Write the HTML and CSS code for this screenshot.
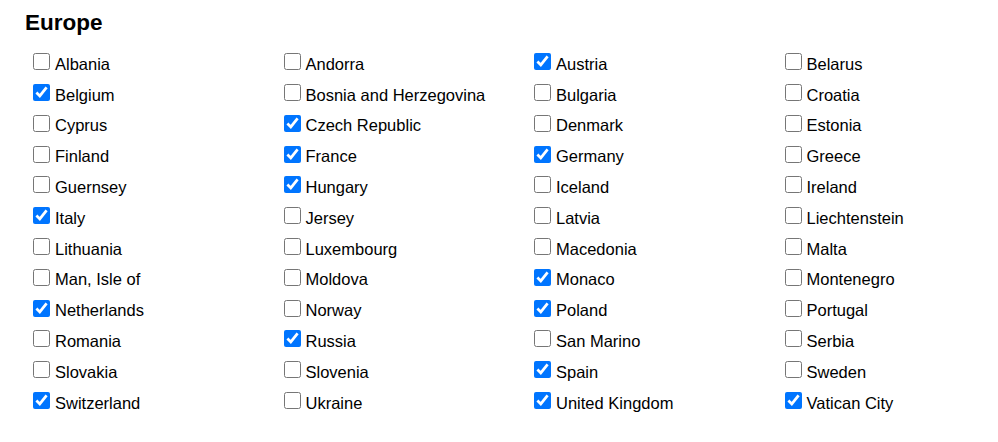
FILE: index.html
```html
<!DOCTYPE html>
<html>
<head>
<meta charset="utf-8">
<link rel="stylesheet" href="styles.css">
</head>
<body>
<div class="page">
  <h2 class="title">Europe</h2>
  <div class="list">
    <label class="item"><input type="checkbox"><span>Albania</span></label>
    <label class="item"><input type="checkbox"><span>Andorra</span></label>
    <label class="item"><input type="checkbox" checked><span>Austria</span></label>
    <label class="item"><input type="checkbox"><span>Belarus</span></label>
    <label class="item"><input type="checkbox" checked><span>Belgium</span></label>
    <label class="item"><input type="checkbox"><span>Bosnia and Herzegovina</span></label>
    <label class="item"><input type="checkbox"><span>Bulgaria</span></label>
    <label class="item"><input type="checkbox"><span>Croatia</span></label>
    <label class="item"><input type="checkbox"><span>Cyprus</span></label>
    <label class="item"><input type="checkbox" checked><span>Czech Republic</span></label>
    <label class="item"><input type="checkbox"><span>Denmark</span></label>
    <label class="item"><input type="checkbox"><span>Estonia</span></label>
    <label class="item"><input type="checkbox"><span>Finland</span></label>
    <label class="item"><input type="checkbox" checked><span>France</span></label>
    <label class="item"><input type="checkbox" checked><span>Germany</span></label>
    <label class="item"><input type="checkbox"><span>Greece</span></label>
    <label class="item"><input type="checkbox"><span>Guernsey</span></label>
    <label class="item"><input type="checkbox" checked><span>Hungary</span></label>
    <label class="item"><input type="checkbox"><span>Iceland</span></label>
    <label class="item"><input type="checkbox"><span>Ireland</span></label>
    <label class="item"><input type="checkbox" checked><span>Italy</span></label>
    <label class="item"><input type="checkbox"><span>Jersey</span></label>
    <label class="item"><input type="checkbox"><span>Latvia</span></label>
    <label class="item"><input type="checkbox"><span>Liechtenstein</span></label>
    <label class="item"><input type="checkbox"><span>Lithuania</span></label>
    <label class="item"><input type="checkbox"><span>Luxembourg</span></label>
    <label class="item"><input type="checkbox"><span>Macedonia</span></label>
    <label class="item"><input type="checkbox"><span>Malta</span></label>
    <label class="item"><input type="checkbox"><span>Man, Isle of</span></label>
    <label class="item"><input type="checkbox"><span>Moldova</span></label>
    <label class="item"><input type="checkbox" checked><span>Monaco</span></label>
    <label class="item"><input type="checkbox"><span>Montenegro</span></label>
    <label class="item"><input type="checkbox" checked><span>Netherlands</span></label>
    <label class="item"><input type="checkbox"><span>Norway</span></label>
    <label class="item"><input type="checkbox" checked><span>Poland</span></label>
    <label class="item"><input type="checkbox"><span>Portugal</span></label>
    <label class="item"><input type="checkbox"><span>Romania</span></label>
    <label class="item"><input type="checkbox" checked><span>Russia</span></label>
    <label class="item"><input type="checkbox"><span>San Marino</span></label>
    <label class="item"><input type="checkbox"><span>Serbia</span></label>
    <label class="item"><input type="checkbox"><span>Slovakia</span></label>
    <label class="item"><input type="checkbox"><span>Slovenia</span></label>
    <label class="item"><input type="checkbox" checked><span>Spain</span></label>
    <label class="item"><input type="checkbox"><span>Sweden</span></label>
    <label class="item"><input type="checkbox" checked><span>Switzerland</span></label>
    <label class="item"><input type="checkbox"><span>Ukraine</span></label>
    <label class="item"><input type="checkbox" checked><span>United Kingdom</span></label>
    <label class="item"><input type="checkbox" checked><span>Vatican City</span></label>
  </div>
</div>
</body>
</html>
```
FILE: styles.css
```css
html, body {
  margin: 0;
  padding: 0;
  background: #ffffff;
}
body {
  font-family: "Liberation Sans", Arial, sans-serif;
  color: #000;
}
.page {
  padding: 0 25px;
}
.title {
  margin: 10px 0 0 0;
  font-size: 22.5px;
  line-height: 26px;
  font-weight: bold;
}
.list {
  margin-top: 6px;
  padding-left: 8px;
  display: grid;
  grid-template-columns: repeat(4, 250.5px);
  grid-auto-rows: 30.8px;
}
.item {
  display: flex;
  align-items: flex-end;
  gap: 5px;
  font-size: 16.5px;
  line-height: 18px;
  white-space: nowrap;
}
.item input {
  width: 17px;
  height: 17px;
  margin: 0 0 2.5px 0;
  flex: none;
}
```
